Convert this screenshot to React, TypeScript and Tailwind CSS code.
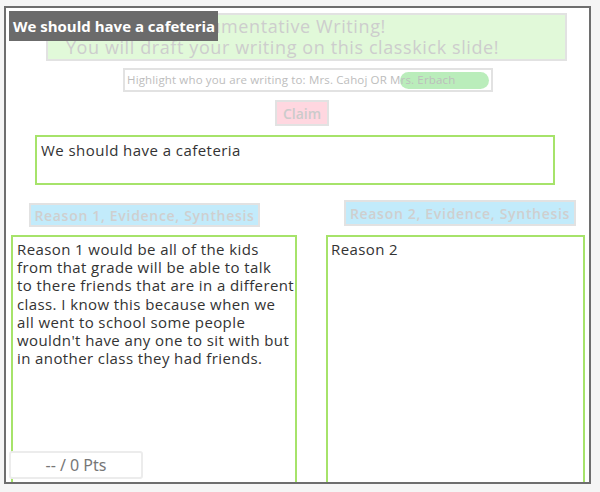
import React from "react";

const gotham = { fontFamily: '"Open Sans", "Noto Sans", sans-serif' };

export default function App() {
  const r1 = [
    "Reason 1 would be all of the kids",
    "from that grade will be able to talk",
    "to there friends that are in a different",
    "class. I know this because when we",
    "all went to school some people",
    "wouldn't have any one to sit with but",
    "in another class they had friends.",
  ];
  return (
    <div className="w-[600px] h-[492px] bg-[#f5f5f5] overflow-hidden pt-[6px] pl-[4px]" style={gotham}>
      <div className="relative w-[587px] h-[478px] border-2 border-[#6e6e6e] bg-white overflow-hidden">
        <div className="flex flex-col">
          {/* Title */}
          <div className="mt-[5px] ml-[40px] w-[521px] h-[48px] border-2 border-[#e2e2e2] bg-[#e1f9d9] pr-[48px] flex flex-col items-center justify-center text-[18px] leading-[21px] text-[#cdcdcd] tracking-[0.6px] whitespace-nowrap">
            <div>Argumentative Writing!</div>
            <div>You will draft your writing on this classkick slide!</div>
          </div>
          {/* Highlight */}
          <div className="relative mt-[7px] ml-[117px] w-[370px] h-[24px] border-2 border-[#e2e2e2] bg-white flex items-center pl-[2px] text-[11.5px] tracking-[0.15px] text-[#bdbdbd] whitespace-nowrap">
            <div className="absolute left-[275px] top-[2px] w-[89px] h-[17px] rounded-full bg-[#b2ebb4] opacity-90" />
            <span className="relative">Highlight who you are writing to: Mrs. Cahoj OR Mrs. Erbach</span>
          </div>
          {/* Claim */}
          <div className="mt-[8px] ml-[269px] w-[54px] h-[26px] border-2 border-[#e2e2e2] bg-[#ffd7e0] flex items-center justify-center text-[14px] font-semibold text-[#cbcbcb]">
            Claim
          </div>
          {/* Claim response */}
          <div className="mt-[9px] ml-[29px] w-[520px] h-[50px] border-2 border-[#a6e36a] px-[4px] pt-[3px] text-[15px] leading-[20px] tracking-[0.45px] text-[#333]">
            We should have a cafeteria
          </div>
          {/* Reason labels */}
          <div className="flex items-start mt-[15px]">
            <div className="mt-[3px] ml-[23px] w-[231px] h-[24px] border-2 border-[#e2e2e2] bg-[#c2ebfb] flex items-center justify-center text-[14px] tracking-[0.7px] font-semibold text-[#cfcfcf] whitespace-nowrap">
              Reason 1, Evidence, Synthesis
            </div>
            <div className="ml-[84px] w-[232px] h-[26px] border-2 border-[#e2e2e2] bg-[#c2ebfb] flex items-center justify-center text-[14px] tracking-[0.7px] font-semibold text-[#cfcfcf] whitespace-nowrap">
              Reason 2, Evidence, Synthesis
            </div>
          </div>
          {/* Reason boxes */}
          <div className="flex items-start mt-[8px]">
            <div className="ml-[5px] w-[286px] h-[300px] border-2 border-[#a6e36a] pl-[4px] pt-[3px] text-[15px] leading-[18.2px] tracking-[0.4px] text-[#333] whitespace-nowrap">
              {r1.map((l, i) => (
                <div key={i}>{l}</div>
              ))}
            </div>
            <div className="ml-[29px] w-[259px] h-[300px] border-2 border-[#a6e36a] pl-[3px] pt-[3px] text-[15px] leading-[18.2px] tracking-[0.4px] text-[#333]">
              Reason 2
            </div>
          </div>
        </div>
        {/* Overlay label */}
        <div className="absolute left-[3px] top-[3px] w-[209px] h-[30px] bg-[#6b6b6b] flex items-center pl-[4px] text-[15px] font-bold text-white whitespace-nowrap">
          We should have a cafeteria
        </div>
        {/* Points */}
        <div className="absolute left-[3px] top-[443px] w-[134px] h-[28px] bg-white border-2 border-[#ececec] rounded-[3px] flex items-center justify-center text-[16px] text-[#777]" style={{ fontFamily: '"Source Sans Pro", "Noto Sans", sans-serif' }}>
          -- / 0 Pts
        </div>
      </div>
    </div>
  );
}
